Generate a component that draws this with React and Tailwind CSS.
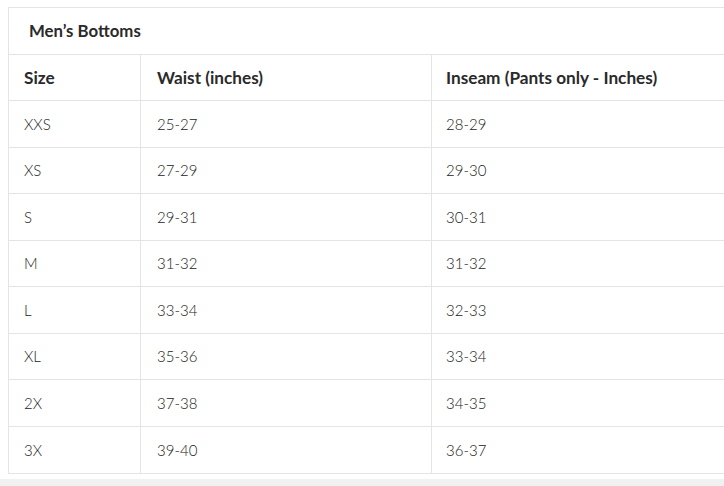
import React from "react";

const rows = [
  ["XXS", "25-27", "28-29"],
  ["XS", "27-29", "29-30"],
  ["S", "29-31", "30-31"],
  ["M", "31-32", "31-32"],
  ["L", "33-34", "32-33"],
  ["XL", "35-36", "33-34"],
  ["2X", "37-38", "34-35"],
  ["3X", "39-40", "36-37"],
];

const App = () => {
  return (
    <div className="w-[724px] h-[486px] overflow-hidden bg-white flex flex-col font-['Lato',sans-serif]">
      <div className="pt-[7px] pl-2 bg-white">
        <div className="w-[760px] border border-[#e4e4e4]">
          {/* title row */}
          <div className="h-[47px] flex items-center pl-[20px] text-[16.8px] font-bold text-[#2a2a2a] border-b border-[#e4e4e4]">
            Men’s Bottoms
          </div>

          {/* header */}
          <div className="grid grid-cols-[132px_291px_1fr] h-[46px] border-b border-[#e4e4e4] text-[17.2px] font-bold text-[#2a2a2a]">
            <div className="flex items-center pl-[15px] border-r border-[#e4e4e4]">Size</div>
            <div className="flex items-center pl-[16px] border-r border-[#e4e4e4]">Waist (inches)</div>
            <div className="flex items-center pl-[14px]">Inseam (Pants only - Inches)</div>
          </div>

          {rows.map((r, i) => (
            <div
              key={r[0]}
              className={`grid grid-cols-[132px_291px_1fr] h-[46.5px] text-[15px] font-light text-[#222] ${
                i < rows.length - 1 ? "border-b border-[#e4e4e4]" : ""
              }`}
            >
              <div className="flex items-center pl-[15px] border-r border-[#e4e4e4]">{r[0]}</div>
              <div className="flex items-center pl-[16px] border-r border-[#e4e4e4]">{r[1]}</div>
              <div className="flex items-center pl-[14px]">{r[2]}</div>
            </div>
          ))}
        </div>
      </div>
      <div className="h-[5px] bg-white" />
      <div className="flex-1 bg-[#f1f1f1]" />
    </div>
  );
};

export default App;
